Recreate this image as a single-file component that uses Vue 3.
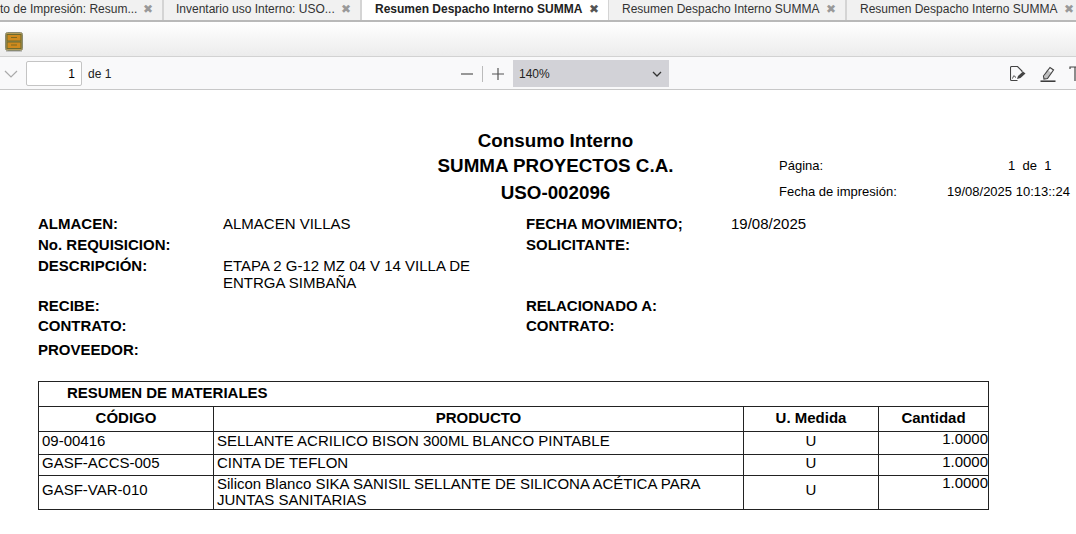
<template>
  <div class="page">
    <div class="tabs">
      <div v-for="tab in tabs" :key="tab.width" class="tab" :class="{ active: tab.active }" :style="{ width: tab.width + 'px' }">
        <span class="tab-label">{{ tab.label }}</span>
        <span class="tab-close">✖</span>
      </div>
    </div>

    <div class="toolbar">
      <svg class="cabinet" width="19" height="20" viewBox="0 0 19 20">
        <rect x="0.5" y="0.5" width="17" height="18" rx="2" fill="#b59a55" stroke="#8a8a70" />
        <rect x="2" y="2.500" width="14" height="6.500" fill="#cf8a1e" stroke="#6a6a30" />
        <rect x="2" y="10" width="14" height="6.500" fill="#cf8a1e" stroke="#6a6a30" />
        <rect x="6" y="5" width="6" height="1" fill="#7d6a20" />
        <rect x="6" y="12.500" width="6" height="1" fill="#7d6a20" />
        <rect x="1" y="19" width="16" height="1" fill="#c4c4c4" />
      </svg>
    </div>

    <div class="pdfbar">
      <div class="pager">
        <svg width="14" height="8" viewBox="0 0 14 8"><path d="M1 1l6 6 6-6" fill="none" stroke="#aaa" stroke-width="1.2" /></svg>
        <input class="page-input" value="1" readonly />
        <span class="of">de 1</span>
      </div>
      <div class="zoom">
        <svg width="14" height="14" viewBox="0 0 14 14"><path d="M1 7h12" stroke="#555" stroke-width="1.2" /></svg>
        <span class="zoom-sep"></span>
        <svg width="14" height="14" viewBox="0 0 14 14"><path d="M1 7h12M7 1v12" stroke="#555" stroke-width="1.2" /></svg>
        <div class="zoom-select">
          <span>140%</span>
          <svg width="10" height="6" viewBox="0 0 10 6"><path d="M1 1l4 4 4-4" fill="none" stroke="#333" stroke-width="1.3" /></svg>
        </div>
      </div>
      <div class="tools">
        <svg width="17" height="16" viewBox="0 0 17 16">
          <path d="M7.500 14.500H1.500a1 1 0 0 1-1-1V1.500a1 1 0 0 1 1-1h6l4.500 4.500v1" fill="none" stroke="#444" stroke-width="1.1" />
          <path d="M2.500 12.500c1-2.500 1.500-3.500 2-2.500s.5 1.500 1.500 1" fill="none" stroke="#444" />
          <path d="M7 13l1-3 5-4.500 2.500 2-5 4.500z" fill="#444" />
        </svg>
        <svg width="16" height="16" viewBox="0 0 16 16">
          <path d="M3.500 10l6.500-8.500 3.500 2.500-6 8.500-3.500.5z" fill="none" stroke="#444" stroke-width="1.2" />
          <path d="M7 3.500l4.500 3.500L7 12.500l-3.500.5z" fill="#555" opacity="0.35" />
          <path d="M0.500 15.200h15" stroke="#333" stroke-width="1.500" />
        </svg>
        <svg width="10" height="16" viewBox="0 0 10 16">
          <path d="M1 3V1h9M6 1v14" fill="none" stroke="#444" stroke-width="1.2" />
        </svg>
      </div>
    </div>

    <div class="doc">
      <div class="doc-head">
        <div class="titles">
          <div>Consumo Interno</div>
          <div>SUMMA PROYECTOS C.A.</div>
          <div>USO-002096</div>
        </div>
        <div class="print-info">
          <span>Página:</span>
          <span class="pages">1&nbsp; de&nbsp; 1</span>
          <span>Fecha de impresión:</span>
          <span>19/08/2025 10:13::24</span>
        </div>
      </div>

      <div class="info">
        <template v-for="row in infoRows" :key="row.a">
          <b :style="{ height: row.h + 'px' }">{{ row.a }}</b>
          <span class="info-value">{{ row.av }}</span>
          <b>{{ row.b }}</b>
          <span>{{ row.bv }}</span>
        </template>
      </div>

      <table class="materials">
        <colgroup>
          <col class="c1" /><col class="c2" /><col class="c3" /><col class="c4" />
        </colgroup>
        <thead>
          <tr class="r-title"><th colspan="4" class="title-cell">RESUMEN DE MATERIALES</th></tr>
          <tr class="r-head">
            <th>CÓDIGO</th>
            <th>PRODUCTO</th>
            <th>U. Medida</th>
            <th>Cantidad</th>
          </tr>
        </thead>
        <tbody>
          <tr v-for="item in items" :key="item.code" :style="{ height: item.h + 'px' }">
            <td>{{ item.code }}</td>
            <td class="product">{{ item.name }}</td>
            <td class="unit">U</td>
            <td class="qty">1.0000</td>
          </tr>
        </tbody>
      </table>
    </div>
  </div>
</template>

<script setup>
const tabs = [
  { label: "to de Impresión: Resum...", width: 164 },
  { label: "Inventario uso Interno: USO...", width: 198 },
  { label: "Resumen Despacho Interno SUMMA", width: 247, active: true },
  { label: "Resumen Despacho Interno SUMMA", width: 238 },
  { label: "Resumen Despacho Interno SUMMA", width: 238 },
];

const infoRows = [
  { a: "ALMACEN:", av: "ALMACEN VILLAS", b: "FECHA MOVIMIENTO;", bv: "19/08/2025", h: 21 },
  { a: "No. REQUISICION:", av: "", b: "SOLICITANTE:", bv: "", h: 21 },
  { a: "DESCRIPCIÓN:", av: "ETAPA 2 G-12 MZ 04 V 14 VILLA DE ENTRGA SIMBAÑA", b: "", bv: "", h: 40 },
  { a: "RECIBE:", av: "", b: "RELACIONADO A:", bv: "", h: 20 },
  { a: "CONTRATO:", av: "", b: "CONTRATO:", bv: "", h: 24 },
  { a: "PROVEEDOR:", av: "", b: "", bv: "", h: 20 },
];

const items = [
  { code: "09-00416", name: "SELLANTE ACRILICO BISON 300ML BLANCO PINTABLE", h: 23 },
  { code: "GASF-ACCS-005", name: "CINTA DE TEFLON", h: 21 },
  { code: "GASF-VAR-010", name: "Silicon Blanco SIKA SANISIL SELLANTE DE SILICONA ACÉTICA PARA JUNTAS SANITARIAS", h: 33 },
];
</script>

<style scoped>
.page {
  width: 1076px;
  height: 534px;
  overflow: hidden;
  background: #fff;
  font-family: "Liberation Sans", Arial, sans-serif;
  color: #000;
}

.tabs {
  display: flex;
  height: 22px;
  background: #f1f1f1;
  border-bottom: 2px solid #b9b9b9;
  box-sizing: border-box;
  overflow: hidden;
}

.tab {
  flex: none;
  display: flex;
  align-items: center;
  justify-content: space-between;
  box-sizing: border-box;
  height: 20px;
  padding: 0 9px 3px 13px;
  border-right: 2px solid #d4d4d4;
  font-size: 12px;
  color: #333;
  white-space: nowrap;
}

.tab:first-child {
  padding-left: 0;
}

.tab:nth-child(2) {
  padding-left: 12px;
}

.tab.active {
  background: #fff;
  font-weight: bold;
  color: #222;
  border-right: 1px solid #d4d4d4;
}

.tab-close {
  font-size: 12px;
  line-height: 12px;
  font-weight: normal;
  color: #999;
}

.tab.active .tab-close {
  color: #555;
}

.toolbar {
  display: flex;
  align-items: flex-start;
  height: 35px;
  padding: 10px 0 0 5px;
  box-sizing: border-box;
  background: linear-gradient(#fff, #ececec);
  border-bottom: 1px solid #d2d2d2;
}

.cabinet {
  display: block;
}

.pdfbar {
  display: grid;
  grid-template-columns: 460px 209px 1fr;
  height: 33px;
  padding-top: 1px;
  box-sizing: border-box;
  align-items: center;
  background: #f9f9fa;
  border-bottom: 1px solid #c8c8c8;
}

.pager {
  display: flex;
  align-items: center;
  padding-left: 4px;
}

.page-input {
  width: 56px;
  height: 25px;
  box-sizing: border-box;
  margin-left: 8px;
  padding: 0 6px;
  border: 1px solid #c4c4c4;
  border-radius: 2px;
  background: #fff;
  text-align: right;
  font: 12px "Liberation Sans", Arial, sans-serif;
  color: #000;
  outline: none;
}

.of {
  margin-left: 6px;
  font-size: 12px;
  color: #222;
}

.zoom {
  display: flex;
  align-items: center;
  height: 27px;
}

.zoom-sep {
  width: 1px;
  height: 16px;
  margin: 0 8px;
  background: #bbb;
}

.zoom-select {
  flex: none;
  display: flex;
  align-items: center;
  justify-content: space-between;
  width: 156px;
  height: 27px;
  box-sizing: border-box;
  margin-left: 8px;
  padding: 0 7px 0 6px;
  background: #d2d2d7;
  font-size: 12px;
  color: #222;
}

.tools {
  display: flex;
  align-items: center;
  justify-content: flex-end;
  gap: 13px;
  height: 100%;
  margin-right: -3px;
}

.doc {
  padding: 38px 0 0 38px;
}

.doc-head {
  display: grid;
  grid-template-columns: 741px 1fr;
}

.titles {
  padding-left: 294px;
  text-align: center;
  font-size: 18.800px;
  font-weight: bold;
}

.titles div:nth-child(1) { line-height: 25.500px; }
.titles div:nth-child(2) { line-height: 23px; }
.titles div:nth-child(3) { line-height: 31px; }

.print-info {
  display: grid;
  grid-template-columns: 168px 1fr;
  grid-template-rows: 26px 26px;
  align-content: start;
  align-items: center;
  margin-top: 24px;
  font-size: 13px;
}

.pages {
  padding-left: 61px;
}

.info {
  display: grid;
  grid-template-columns: 185px 303px 205px 1fr;
  margin-top: 7px;
  font-size: 15px;
  line-height: 17px;
}

.info-value {
  width: 265px;
}

.materials {
  width: 950px;
  margin-top: 20px;
  border-collapse: collapse;
  table-layout: fixed;
  font-size: 15px;
  line-height: 16.500px;
}

.c1 { width: 175px; }
.c2 { width: 530px; }
.c3 { width: 135px; }
.c4 { width: 110px; }

.materials th,
.materials td {
  padding: 0 3px;
  border: 1px solid #222;
}

.materials td {
  padding-bottom: 3px;
}

.materials tr:last-child .product {
  padding-bottom: 0;
}

.r-title { height: 25px; }
.r-head { height: 25px; }

.materials .title-cell {
  padding-left: 28px;
  text-align: left;
}

.unit {
  text-align: center;
}

.materials .qty {
  padding: 0;
  vertical-align: top;
  text-align: right;
  line-height: 13px;
}
</style>

<style>
html,
body {
  margin: 0;
  overflow: hidden;
}
</style>
